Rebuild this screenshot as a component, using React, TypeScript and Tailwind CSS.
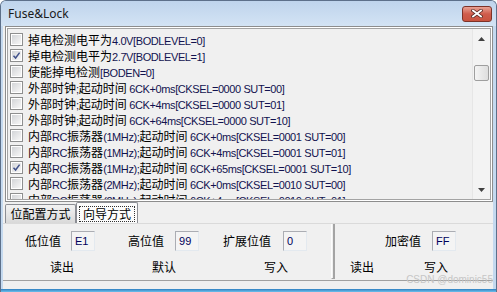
import type { ReactNode } from "react";

const CJK = /([\u4e00-\u9fff]+)/;

const ROWS: { text: string; checked?: boolean }[] = [
  { text: "掉电检测电平为4.0V[BODLEVEL=0]" },
  { text: "掉电检测电平为2.7V[BODLEVEL=1]", checked: true },
  { text: "使能掉电检测[BODEN=0]" },
  { text: "外部时钟;起动时间 6CK+0ms[CKSEL=0000 SUT=00]" },
  { text: "外部时钟;起动时间 6CK+4ms[CKSEL=0000 SUT=01]" },
  { text: "外部时钟;起动时间 6CK+64ms[CKSEL=0000 SUT=10]" },
  { text: "内部RC振荡器(1MHz);起动时间 6CK+0ms[CKSEL=0001 SUT=00]" },
  { text: "内部RC振荡器(1MHz);起动时间 6CK+4ms[CKSEL=0001 SUT=01]" },
  { text: "内部RC振荡器(1MHz);起动时间 6CK+65ms[CKSEL=0001 SUT=10]", checked: true },
  { text: "内部RC振荡器(2MHz);起动时间 6CK+0ms[CKSEL=0010 SUT=00]" },
  { text: "内部RC振荡器(2MHz);起动时间 6CK+4ms[CKSEL=0010 SUT=01]" },
];

/** Chinese runs in the CJK face, everything else in the narrow latin face,
 *  the way the old MFC list mixes them. */
function Mixed({ text }: { text: string }) {
  return (
    <>
      {text
        .split(CJK)
        .filter(Boolean)
        .map((part, i) =>
          CJK.test(part) ? (
            <span key={i} className="text-[12px] text-black">{part}</span>
          ) : (
            <span
              key={i}
              className="font-['Liberation_Sans',sans-serif] text-[11px] tracking-[-0.4px] text-[#12124f] whitespace-pre"
            >
              {part}
            </span>
          )
        )}
    </>
  );
}

function CheckBox({ checked }: { checked?: boolean }) {
  return (
    <div className="w-[13px] h-[13px] shrink-0 border border-[#8e8f8f] bg-white p-px">
      <div className="w-full h-full bg-gradient-to-br from-[#d3d5d8] to-[#f7f7f7] flex items-center justify-center">
        {checked && (
          <svg width="9" height="9" viewBox="0 0 9 9">
            <path d="M1.5 4.8 L3.6 7 L7.6 1.6" fill="none" stroke="#40518a" strokeWidth="1.5" />
          </svg>
        )}
      </div>
    </div>
  );
}

function Edit({ value }: { value: string }) {
  return (
    <div className="w-[24px] h-[20px] shrink-0 border border-[#abadb3] border-r-[#e3e9ef] border-b-[#e3e9ef] bg-[#f4f4f4] flex items-center pl-[3px] font-['Liberation_Sans',sans-serif] text-[11px] text-[#00005a]">
      {value}
    </div>
  );
}

function Label({ children, className = "" }: { children: ReactNode; className?: string }) {
  return <span className={`text-[12px] leading-[20px] text-black shrink-0 ${className}`}>{children}</span>;
}

function ScrollBar() {
  return (
    <div className="w-[18px] h-full shrink-0 flex flex-col items-center bg-[#f3f3f3] border-l border-[#e6e6e6]">
      <div className="h-[20px] flex items-center justify-center">
        <svg width="7" height="4" viewBox="0 0 7 4">
          <path d="M0 4 L3.5 0 L7 4 Z" fill="#404040" />
        </svg>
      </div>
      <div className="mt-[16px] w-[15px] h-[16px] rounded-[2px] border border-[#9e9e9e] bg-gradient-to-r from-[#f4f4f4] to-[#dedede]" />
      <div className="flex-1" />
      <div className="h-[18px] flex items-center justify-center">
        <svg width="7" height="4" viewBox="0 0 7 4">
          <path d="M0 0 L7 0 L3.5 4 Z" fill="#404040" />
        </svg>
      </div>
    </div>
  );
}

export default function App() {
  return (
    <div className="w-[497px] h-[292px] relative flex flex-col overflow-hidden rounded-t-[6px] border border-b-0 border-[#5d708a] bg-[#c4d9ef] font-['Noto_Sans_CJK_SC',sans-serif]">
      {/* title bar */}
      <div className="h-[25px] shrink-0 flex items-center justify-between pl-[7px] pr-[4px] bg-gradient-to-b from-[#bfd4ec] to-[#d3e3f4]">
        <span className="font-['Noto_Sans',sans-serif] text-[12px] text-[#1a1a1a] leading-none">Fuse&amp;Lock</span>
        <div className="w-[30px] h-[16px] rounded-[3px] border border-[#7d3228] bg-gradient-to-b from-[#e8a295] via-[#cf5c4c] to-[#c9533f] flex items-center justify-center">
          <svg width="12" height="9" viewBox="0 0 12 9">
            <path d="M2 1.5 L10 7.5 M10 1.5 L2 7.5" stroke="#5a2a24" strokeWidth="3.4" strokeLinecap="square" />
            <path d="M2 1.5 L10 7.5 M10 1.5 L2 7.5" stroke="#ffffff" strokeWidth="1.8" strokeLinecap="square" />
          </svg>
        </div>
      </div>

      {/* client area */}
      <div className="flex-1 min-h-0 ml-[2px] mr-[3px] flex flex-col bg-[#f0f0f0]">
        {/* fuse list */}
        <div className="h-[176px] shrink-0 ml-[2px] border border-[#8d8d8d] bg-white p-px">
          <div className="h-full border border-[#a3a3a3] bg-[#f0f0f0] flex">
            <div className="flex-1 min-w-0 overflow-hidden pt-[2px] pl-[2px]">
              {ROWS.map((row, i) => (
                <div key={i} className="h-[16px] flex items-center whitespace-nowrap leading-[16px]">
                  <CheckBox checked={row.checked} />
                  <div className="ml-[5px]">
                    <Mixed text={row.text} />
                  </div>
                </div>
              ))}
            </div>
            <ScrollBar />
          </div>
        </div>

        {/* tabs */}
        <div className="h-[21px] shrink-0 flex items-end pl-[2px]">
          <div className="w-[71px] h-[19px] border border-b-0 border-[#8c8e94] rounded-t-[2px] bg-gradient-to-b from-[#f3f3f3] to-[#d9d9d9] flex items-center justify-center text-[12px] leading-none text-black">
            位配置方式
          </div>
          <div className="w-[62px] h-[21px] border border-b-0 border-[#8c8e94] rounded-t-[2px] bg-[#fcfcfc] flex items-center justify-center pt-[2px]">
            <span className="px-[3px] h-[16px] border border-dotted border-[#333] flex items-center text-[12px] leading-none text-black">
              向导方式
            </span>
          </div>
        </div>

        {/* fuse value panel */}
        <div className="h-[58px] shrink-0 flex border-t border-[#dadada] border-b border-b-[#a0a0a0]">
          <div className="w-[328px] shrink-0 flex flex-col">
            <div className="mt-[7px] h-[20px] flex items-center">
              <Label className="ml-[22px]">低位值</Label>
              <div className="ml-[10px]"><Edit value="E1" /></div>
              <Label className="ml-[33px]">高位值</Label>
              <div className="ml-[11px]"><Edit value="99" /></div>
              <Label className="ml-[24px]">扩展位值</Label>
              <div className="ml-[12px]"><Edit value="0" /></div>
            </div>
            <div className="mt-[6px] h-[20px] flex items-center">
              <Label className="ml-[47px]">读出</Label>
              <Label className="ml-[78px]">默认</Label>
              <Label className="ml-[88px]">写入</Label>
            </div>
          </div>
          <div className="w-[4px] h-[55px] shrink-0 border-l border-l-[#fdfdfd] border-r-2 border-r-[#a4a4a4] border-b border-b-[#a4a4a4]" />
          <div className="flex-1 flex flex-col">
            <div className="mt-[7px] h-[20px] flex items-center">
              <Label className="ml-[50px]">加密值</Label>
              <div className="ml-[11px]"><Edit value="FF" /></div>
            </div>
            <div className="mt-[6px] h-[20px] flex items-center">
              <Label className="ml-[15px]">读出</Label>
              <Label className="ml-[50px]">写入</Label>
            </div>
          </div>
        </div>
        <div className="flex-1" />
      </div>

      {/* bottom frame */}
      <div className="h-[3px] shrink-0 bg-gradient-to-b from-[#2f7fc0] to-[#6cc0ec]" />

      <span className="absolute right-[3px] bottom-[7px] font-['Liberation_Sans',sans-serif] text-[10px] leading-none text-[#c6c6c6]">
        CSDN @dominic55
      </span>
    </div>
  );
}
